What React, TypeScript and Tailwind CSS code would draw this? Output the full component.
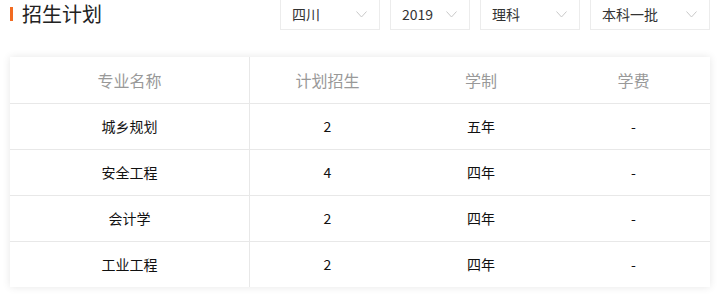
const font = { fontFamily: '"Microsoft YaHei", "Noto Sans CJK SC", "Noto Sans", sans-serif' };

const filters = [
  { label: "四川", w: "w-[100px]" },
  { label: "2019", w: "w-[80px]" },
  { label: "理科", w: "w-[100px]" },
  { label: "本科一批", w: "w-[120px]" },
];

const rows = [
  ["城乡规划", "2", "五年", "-"],
  ["安全工程", "4", "四年", "-"],
  ["会计学", "2", "四年", "-"],
  ["工业工程", "2", "四年", "-"],
];

function Chevron() {
  return (
    <svg width="11" height="7" viewBox="0 0 11 7" fill="none">
      <path d="M0.5 0.5L5.5 6L10.5 0.5" stroke="#c8c8c8" strokeWidth="1" />
    </svg>
  );
}

export default function App() {
  return (
    <div className="w-[720px] h-[296px] bg-white overflow-hidden" style={font}>
      <div className="flex items-start justify-between h-[30px] px-[10px]">
        <div className="flex items-center h-[27px] gap-[9px]">
          <span className="w-[3px] h-[14px] bg-[#f26b21]" />
          <span className="text-[20px] text-[#222] leading-[27px]">招生计划</span>
        </div>
        <div className="flex gap-[10px]">
          {filters.map((f) => (
            <div
              key={f.label}
              className={`${f.w} h-[31px] -mt-[1px] flex items-center justify-between pl-[11px] pr-[12px] border border-[#ececec] bg-white text-[14px] text-[#333]`}
            >
              <span>{f.label}</span>
              <Chevron />
            </div>
          ))}
        </div>
      </div>

      <div className="mx-[10px] mt-[27px] bg-white shadow-[0_0_8px_rgba(0,0,0,0.1)]">
        <div className="grid grid-cols-[240px_155px_152px_153px] h-[46px] text-[16px] text-[#999]">
          <div className="flex items-center justify-center border-r border-[#e8e8e8]">专业名称</div>
          <div className="flex items-center justify-center">计划招生</div>
          <div className="flex items-center justify-center">学制</div>
          <div className="flex items-center justify-center">学费</div>
        </div>
        {rows.map((r) => (
          <div
            key={r[0]}
            className="grid grid-cols-[240px_155px_152px_153px] h-[46px] border-t border-[#e8e8e8] text-[14px] text-[#111]"
          >
            <div className="flex items-center justify-center border-r border-[#e8e8e8]">{r[0]}</div>
            <div className="flex items-center justify-center">{r[1]}</div>
            <div className="flex items-center justify-center">{r[2]}</div>
            <div className="flex items-center justify-center">{r[3]}</div>
          </div>
        ))}
      </div>
    </div>
  );
}
